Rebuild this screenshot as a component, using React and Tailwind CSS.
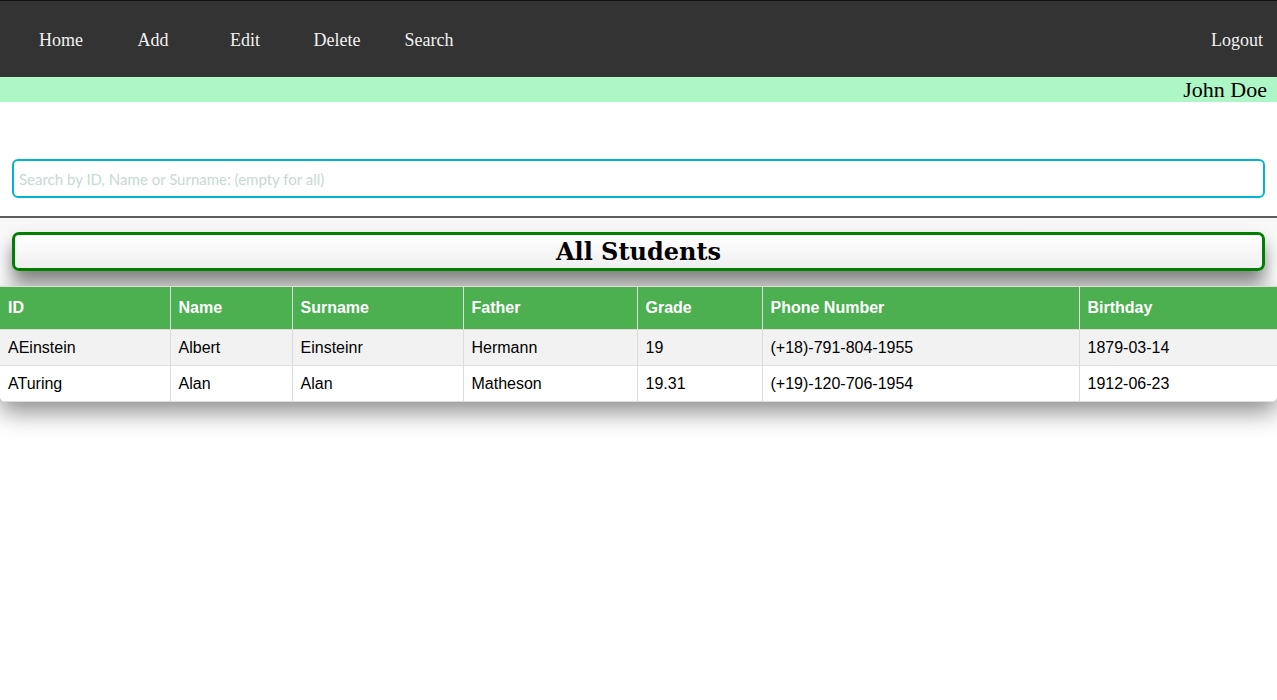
import React from 'react';

const navItems = ['Home', 'Add', 'Edit', 'Delete', 'Search'];

const columns = [
  { label: 'ID', w: 'w-[170px]' },
  { label: 'Name', w: 'w-[122px]' },
  { label: 'Surname', w: 'w-[171px]' },
  { label: 'Father', w: 'w-[174px]' },
  { label: 'Grade', w: 'w-[125px]' },
  { label: 'Phone Number', w: 'w-[317px]' },
  { label: 'Birthday', w: 'w-[198px]' },
];

const students = [
  ['AEinstein', 'Albert', 'Einsteinr', 'Hermann', '19', '(+18)-791-804-1955', '1879-03-14'],
  ['ATuring', 'Alan', 'Alan', 'Matheson', '19.31', '(+19)-120-706-1954', '1912-06-23'],
];

export default function App() {
  return (
    <div className="min-h-[700px] bg-white">
      {/* Top navigation */}
      <nav className="h-[77px] pt-[2px] bg-[#333] border-t border-[#111] flex items-center justify-between font-['Liberation_Serif',serif] text-[18px] text-[#f2f2f2]">
        <ul className="flex ml-[15px]">
          {navItems.map((item) => (
            <li key={item} className="w-[92px] text-center cursor-pointer">
              {item}
            </li>
          ))}
        </ul>
        <span className="mr-[14px] cursor-pointer">Logout</span>
      </nav>

      {/* Logged-in user */}
      <div className="h-[25px] bg-[#adf7c6] flex items-center justify-end pr-[10px] font-['Liberation_Serif',serif] text-[22px] text-black leading-none">
        John Doe
      </div>

      {/* Search */}
      <div className="px-[12px] pt-[57px]">
        <input
          type="text"
          placeholder="Search by ID, Name or Surname: (empty for all)"
          className="w-full h-[39px] border-2 border-[#00b5cc] rounded-[6px] px-[5px] font-['Lato',sans-serif] text-[15px] placeholder:text-[#c6dad4] outline-none"
        />
      </div>

      <div className="mt-[18px] h-[2px] bg-[#5e5e5e]" />

      {/* Title */}
      <div className="px-[12px] pt-[14px] bg-gradient-to-b from-[#f7f7f7] to-white">
        <div className="h-[39px] border-[3px] border-[#008000] rounded-[7px] bg-gradient-to-b from-white to-[#efefef] shadow-[0_12px_18px_rgba(0,0,0,0.5)] flex items-center justify-center">
          <h2 className="font-['DejaVu_Serif',serif] font-bold text-[24px] text-black leading-none">
            All Students
          </h2>
        </div>
      </div>

      {/* Students table */}
      <div className="mt-[15px] rounded-b-[6px] overflow-hidden shadow-[0_10px_24px_rgba(0,0,0,0.45)] relative">
        <table className="w-full table-fixed border-collapse font-['Liberation_Sans',sans-serif] text-[16px]">
          <thead>
            <tr className="bg-[#4caf50] text-white">
              {columns.map((c) => (
                <th
                  key={c.label}
                  className={`${c.w} text-left font-bold px-2 py-3 leading-[18px] border border-[#ddd] border-l-0 last:border-r-0`}
                >
                  {c.label}
                </th>
              ))}
            </tr>
          </thead>
          <tbody>
            {students.map((row, i) => (
              <tr key={row[0]} className={i % 2 === 0 ? 'bg-[#f2f2f2]' : 'bg-white'}>
                {row.map((cell, j) => (
                  <td
                    key={j}
                    className="h-[36px] px-2 pt-[9px] pb-[8px] leading-[18px] text-black border border-[#ddd] border-l-0 last:border-r-0"
                  >
                    {cell}
                  </td>
                ))}
              </tr>
            ))}
          </tbody>
        </table>
      </div>
    </div>
  );
}
